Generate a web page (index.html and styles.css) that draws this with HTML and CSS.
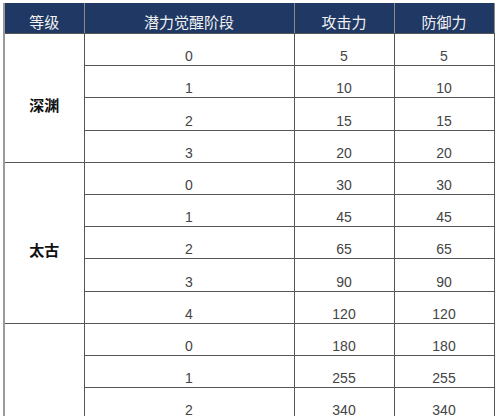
FILE: index.html
```html
<!DOCTYPE html>
<html lang="zh">
<head>
<meta charset="utf-8">
<link rel="stylesheet" href="styles.css">
</head>
<body>
<table class="grid">
  <colgroup>
    <col class="c1"><col class="c2"><col class="c3"><col class="c4">
  </colgroup>
  <thead>
    <tr class="head">
      <th>等级</th><th>潜力觉醒阶段</th><th>攻击力</th><th>防御力</th>
    </tr>
  </thead>
  <tbody>
    <tr><td class="grp" rowspan="4">深渊</td><td>0</td><td>5</td><td>5</td></tr>
    <tr><td>1</td><td>10</td><td>10</td></tr>
    <tr><td>2</td><td>15</td><td>15</td></tr>
    <tr><td>3</td><td>20</td><td>20</td></tr>
    <tr><td class="grp" rowspan="5">太古</td><td>0</td><td>30</td><td>30</td></tr>
    <tr><td>1</td><td>45</td><td>45</td></tr>
    <tr><td>2</td><td>65</td><td>65</td></tr>
    <tr><td>3</td><td>90</td><td>90</td></tr>
    <tr><td>4</td><td>120</td><td>120</td></tr>
    <tr><td class="grp" rowspan="3"></td><td>0</td><td>180</td><td>180</td></tr>
    <tr><td>1</td><td>255</td><td>255</td></tr>
    <tr><td>2</td><td>340</td><td>340</td></tr>
  </tbody>
</table>
</body>
</html>
```
FILE: styles.css
```css
html, body {
  margin: 0;
  padding: 0;
  background: #ffffff;
}
body {
  padding: 3px 0 0 3px;
}
.grid {
  border-collapse: collapse;
  table-layout: fixed;
  width: 490px;
  font-family: "Liberation Sans", "Noto Sans CJK SC", sans-serif;
  color: #444444;
}
.c1 { width: 80px; }
.c2 { width: 210px; }
.c3 { width: 100px; }
.c4 { width: 100px; }
.grid th, .grid td {
  border: 1px solid #555555;
  padding: 0;
  text-align: center;
}
.head {
  height: 30px;
}
.head th {
  background: #1f3864;
  color: #f2f2f2;
  font-family: "Noto Sans CJK SC", sans-serif;
  font-weight: normal;
  font-size: 15px;
  line-height: 18px;
  vertical-align: bottom;
  padding-bottom: 2px;
  border-color: #1f3864 #8a8a8a #555555 #8a8a8a;
}
.grid tbody tr {
  height: 32.2px;
}
.grid td {
  font-size: 14px;
  line-height: 16px;
  vertical-align: bottom;
  padding-bottom: 1px;
}
.grid td.grp {
  font-family: "Noto Sans CJK SC", sans-serif;
  font-weight: bold;
  font-size: 15px;
  color: #111111;
  vertical-align: middle;
  padding: 14px 0 0 0;
  border-left: 2px solid #9a9a9a;
}
.grid th:first-child {
  border-left: 2px solid #9a9a9a;
}
```
